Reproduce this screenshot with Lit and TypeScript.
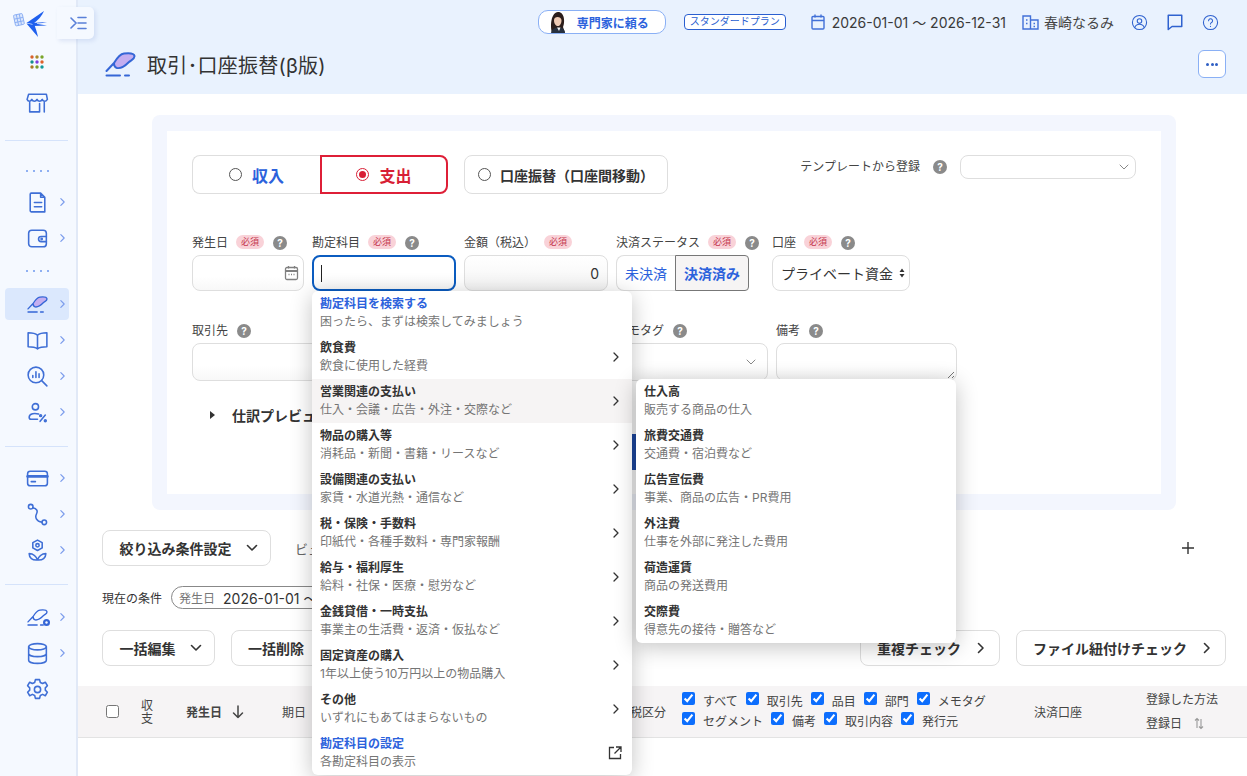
import { LitElement, css, html, svg } from "lit";
import { customElement } from "lit/decorators.js";

const icon = (body: unknown, size = 25, box = "0 0 24 24") =>
  html`<svg width=${size} height=${size} viewBox=${box} fill="none" stroke="currentColor" stroke-width="1.5" stroke-linecap="round" stroke-linejoin="round">${body}</svg>`;

const feather = (w: number, h: number, fill: string) =>
  html`<svg width=${w} height=${h} viewBox="0 0 31 25" fill="none" stroke="#3566d6" stroke-width="2" stroke-linecap="round" stroke-linejoin="round">
    <path d="M1.500 19 L9 11 C12 6 15 2 19 1.500 C23 1 29 1 29.500 4 C30 7 26 8 24 10 C21 13 17 17 12 16 C10 15.500 9 13 9 11" fill=${fill} />
    <path d="M1.500 23.500 H15 M20 23.500 H24" />
  </svg>`;

const help = html`<span class="help">?</span>`;
const req = html`<span class="req">必須</span>`;
const chev = html`<svg class="chev" width="6" height="10" viewBox="0 0 6 10" fill="none" stroke="currentColor" stroke-width="1.4" stroke-linecap="round" stroke-linejoin="round"><path d="M1 1l4 4-4 4" /></svg>`;
const down = html`<svg width="12" height="8" viewBox="0 0 12 8" fill="none" stroke="#333" stroke-width="1.6" stroke-linecap="round" stroke-linejoin="round"><path d="M1.500 1.500L6 6l4.500-4.500" /></svg>`;
const right = html`<svg width="8" height="12" viewBox="0 0 8 12" fill="none" stroke="#333" stroke-width="1.6" stroke-linecap="round" stroke-linejoin="round"><path d="M1.500 1.500L6 6l-4.500 4.500" /></svg>`;
const menuChev = html`<svg width="6" height="10" viewBox="0 0 6 10" fill="none" stroke="#333" stroke-width="1.3" stroke-linecap="round" stroke-linejoin="round"><path d="M1 1l4 4-4 4" /></svg>`;
const thinDown = html`<svg width="10" height="6" viewBox="0 0 10 6" fill="none" stroke="#888" stroke-width="1" stroke-linecap="round" stroke-linejoin="round"><path d="M1 1l4 4 4-4" /></svg>`;

const store = svg`<path d="M3.500 4h17l1 5c-1.500 2.500-4 2.500-5 0-1 2.500-4 2.500-5 0-1 2.500-4 2.500-5 0-1 2.500-3.500 2.500-4.500 0zM4.500 12v9h9.500v-8M18.500 12v9" />`;

const navA = [
  svg`<path d="M6 3h9l4 4v14H6a1 1 0 0 1-1-1V4a1 1 0 0 1 1-1zM15 3v4h4M9 12h7M9 16h7" />`,
  svg`<rect x="3.500" y="4" width="17" height="16" rx="3" /><path d="M20.500 10h-5a2 2 0 0 0 0 5h5" /><circle cx="16" cy="12.500" r=".6" />`,
];

const navB = [
  svg`<path d="M12 7c-2-2-5-2.500-9-2.500V18c4 0 7 .5 9 2 2-1.500 5-2 9-2V4.500C17 4.500 14 5 12 7zM12 7v13" />`,
  svg`<circle cx="10.500" cy="10.500" r="7.500" /><path d="M16 16l5 5M7.500 13v-2M10.500 13V7.500M13.500 13v-3.500" />`,
  svg`<circle cx="10" cy="6.500" r="3" /><path d="M13 13.500c-3-1-9-1-9 3 0 1.500 1 2 2 2h6M14.500 20.500l5-6" /><circle cx="15" cy="15" r=".9" /><circle cx="19.500" cy="20" r=".9" />`,
];

const navC = [
  svg`<rect x="2.500" y="5" width="19" height="14" rx="2.500" /><path d="M2.500 10h19" stroke-width="2.500" /><path d="M6 15h4" />`,
  svg`<circle cx="5.500" cy="4.500" r="2.200" /><circle cx="18.500" cy="19.500" r="2.200" /><path d="M7.500 5.500c4 1 5 3 3.500 6-1.500 3-.5 7 5.300 8" />`,
  svg`<path d="M12 2l4.500 2.500v5L12 12 7.500 9.500v-5z" /><circle cx="12" cy="7" r="1.600" /><path d="M12 21c-1-3-4-6-8-6 0 4 3 6.500 8 6zM12 21c1-3 4-6 8-6 0 4-3 6.500-8 6z" />`,
];

const gear = svg`<circle cx="12" cy="12" r="3" /><path d="M10 2.500h4l.7 2.800 2.200 1 2.600-1.300 2 3.400-2 2 0 2.200 2 2-2 3.400-2.600-1.300-2.200 1-.7 2.800h-4l-.7-2.800-2.200-1-2.600 1.300-2-3.400 2-2 0-2.200-2-2 2-3.400 2.600 1.300 2.200-1z" />`;
const db = svg`<ellipse cx="12" cy="5.500" rx="8.500" ry="3" /><path d="M3.500 5.500v13c0 1.700 3.800 3 8.500 3s8.500-1.300 8.500-3v-13M3.500 12c0 1.700 3.800 3 8.500 3s8.500-1.300 8.500-3" />`;

const menuItems = [
  ["飲食費", "飲食に使用した経費"],
  ["営業関連の支払い", "仕入・会議・広告・外注・交際など"],
  ["物品の購入等", "消耗品・新聞・書籍・リースなど"],
  ["設備関連の支払い", "家賃・水道光熱・通信など"],
  ["税・保険・手数料", "印紙代・各種手数料・専門家報酬"],
  ["給与・福利厚生", "給料・社保・医療・慰労など"],
  ["金銭貸借・一時支払", "事業主の生活費・返済・仮払など"],
  ["固定資産の購入", "1年以上使う10万円以上の物品購入"],
  ["その他", "いずれにもあてはまらないもの"],
];

const subItems = [
  ["仕入高", "販売する商品の仕入"],
  ["旅費交通費", "交通費・宿泊費など"],
  ["広告宣伝費", "事業、商品の広告・PR費用"],
  ["外注費", "仕事を外部に発注した費用"],
  ["荷造運賃", "商品の発送費用"],
  ["交際費", "得意先の接待・贈答など"],
];

@customElement("app-root")
export class AppRoot extends LitElement {
  static override styles = css`
    :host {
      display: flex;
      position: relative;
      width: 100%;
      height: 100vh;
      overflow: hidden;
      background: #fff;
      color: #333;
      font-family: Inter, "Noto Sans CJK JP", sans-serif;
      font-size: 12px;
    }
    * {
      box-sizing: border-box;
    }

    /* sidebar */
    .side {
      display: flex;
      flex-direction: column;
      flex: none;
      width: 78px;
      height: 100%;
      background: #f5f9ff;
      border-right: 2px solid #e1e9f7;
      color: #3f6fd6;
    }
    .logo {
      height: 44px;
      padding: 9px 0 0 13px;
    }
    .row {
      position: relative;
      display: flex;
      flex: none;
      align-items: center;
      justify-content: center;
      width: 64px;
      height: 32px;
      margin: 2px 0 2px 5px;
      border-radius: 4px;
    }
    .row.on {
      background: #dbe8fd;
    }
    .row .chev {
      position: absolute;
      left: 55px;
      top: 11px;
      color: #7b9cec;
      width: 5px;
    }
    .gap-store {
      margin-top: 6px;
    }
    .rule {
      flex: none;
      height: 1px;
      margin: 20px 8px 0 5px;
      background: #d5e3fb;
    }
    .rule.tight {
      margin-top: 16px;
    }
    .sp {
      flex: none;
    }
    .dots {
      display: flex;
      flex: none;
      justify-content: center;
      align-items: center;
      gap: 5px;
      width: 64px;
      height: 20px;
      margin-left: 5px;
    }
    .dots i {
      width: 2px;
      height: 2px;
      background: #8fb0f2;
    }
    .collapse {
      position: absolute;
      left: 57px;
      top: 7px;
      display: flex;
      align-items: flex-start;
      width: 37px;
      height: 32px;
      padding: 9px 0 0 13px;
      border: 0;
      background: #f5f9ff;
      border-radius: 0 5px 5px 0;
      box-shadow: 2px 2px 4px rgba(90, 120, 190, 0.16);
      color: #5a80d8;
    }
    .with-gear {
      position: relative;
      display: flex;
    }
    .with-gear .cog {
      position: absolute;
      left: 15px;
      top: 9px;
    }

    /* header */
    .main {
      flex: 1;
      min-width: 0;
    }
    .head {
      height: 94px;
      background: #e9f2fe;
      padding-right: 21px;
    }
    .top {
      display: flex;
      align-items: center;
      justify-content: flex-end;
      height: 44px;
      color: #333;
      padding-right: 7px;
    }
    .expert {
      display: flex;
      align-items: center;
      width: 128px;
      height: 24px;
      padding-left: 9px;
      background: #fff;
      border: 1px solid #8ab0f5;
      border-radius: 10px;
      color: #2c62dc;
      font-weight: 700;
      font-size: 12px;
      overflow: hidden;
      margin-right: 18px;
    }
    .expert svg {
      margin-right: 9px;
    }
    .plan {
      height: 16px;
      width: 102px;
      line-height: 13px;
      text-align: center;
      border: 1px solid #2a5fd0;
      border-radius: 4px;
      background: #fff;
      color: #2a5fd0;
      font-size: 10px;
      margin-right: 25px;
    }
    .period {
      display: flex;
      align-items: center;
      gap: 7px;
      font-size: 14px;
      margin-right: 16px;
      color: #3a3a3a;
    }
    .who {
      display: flex;
      align-items: center;
      gap: 5px;
      font-size: 14px;
      margin-right: 3px;
      color: #444;
    }
    .top .ic {
      display: flex;
      color: #2f62cf;
      margin-left: 14px;
    }
    .top .ic.chat {
      margin-left: 18px;
    }
    .top .ic.q {
      margin-left: 18px;
    }
    .titlebar {
      display: flex;
      align-items: center;
      height: 36px;
      padding-left: 27px;
      margin-top: 2px;
    }
    .titlebar h1 {
      margin: 0 0 0 11px;
      font-size: 20px;
      font-weight: 400;
      letter-spacing: 0.2px;
      color: #333;
    }
    .more {
      display: flex;
      justify-content: center;
      align-items: center;
      gap: 1.500px;
      width: 28px;
      height: 28px;
      margin-left: auto;
      background: #fff;
      border: 1px solid #8ab0f5;
      border-radius: 6px;
    }
    .more i {
      width: 3px;
      height: 3px;
      border-radius: 50%;
      background: #2f5fc4;
    }

    /* form card */
    .card {
      width: 1024px;
      margin: 21px 0 0 74px;
      padding: 16px 15px;
      background: #f3f6fe;
      border-radius: 8px;
    }
    .inner {
      height: 363px;
      padding: 24px 25px;
      background: #fff;
    }
    .types {
      display: flex;
      height: 39px;
    }
    .type {
      display: flex;
      align-items: center;
      justify-content: center;
      gap: 10px;
      width: 128px;
      border: 1px solid #dedede;
      font-weight: 700;
      font-size: 16px;
    }
    .type.in {
      border-radius: 8px 0 0 8px;
      border-right: 0;
      color: #2c62dc;
    }
    .type.out {
      border: 2px solid #de1f37;
      border-radius: 0 8px 8px 0;
      color: #d81f36;
    }
    .type.move {
      width: 204px;
      margin-left: 16px;
      border-radius: 8px;
      color: #333;
      font-size: 14px;
      gap: 9px;
    }
    .radio {
      position: relative;
      width: 13px;
      height: 13px;
      border: 1px solid #555;
      border-radius: 50%;
    }
    .out .radio {
      border-color: #d81f36;
    }
    .out .radio::after {
      content: "";
      position: absolute;
      inset: 2px;
      border-radius: 50%;
      background: #d81f36;
    }
    .tmpl {
      display: flex;
      align-items: center;
      height: 24px;
      margin-left: auto;
      color: #444;
      font-size: 12px;
      font-weight: 400;
    }
    .tmpl-text {
      margin-bottom: 3px;
    }
    .tmpl .help {
      margin: 0 13px 0 13px;
    }
    .pick {
      display: flex;
      align-items: center;
      justify-content: flex-end;
      width: 176px;
      height: 24px;
      padding-right: 6px;
      border: 1px solid #dedede;
      border-radius: 8px;
    }
    .fields {
      display: flex;
      gap: 8px;
      margin-top: 40px;
    }
    .fields.second {
      margin-top: 31px;
    }
    .f {
      position: relative;
    }
    .lab {
      display: flex;
      align-items: center;
      height: 21px;
      padding-bottom: 6px;
      color: #444;
      white-space: nowrap;
    }
    .help {
      display: inline-flex;
      align-items: center;
      justify-content: center;
      flex: none;
      width: 14px;
      height: 14px;
      margin: 2px 0 0 9px;
      border-radius: 50%;
      background: #8a8a8a;
      color: #fff;
      font-size: 10px;
      font-weight: 700;
      line-height: 1;
    }
    .req {
      flex: none;
      width: 28px;
      height: 14px;
      margin-left: 8px;
      border-radius: 7px;
      background: #f9d2d8;
      color: #c4364d;
      font-size: 9px;
      line-height: 14px;
      text-align: center;
    }
    .box {
      display: flex;
      align-items: center;
      height: 36px;
      padding: 0 8px;
      border: 1px solid #dedede;
      border-radius: 8px;
      background: linear-gradient(#fff 60%, #f8f8f8);
    }
    .w112 {
      width: 112px;
    }
    .w133 {
      width: 133px;
    }
    .w144 {
      width: 144px;
    }
    .box.date {
      justify-content: flex-end;
      padding-right: 4px;
      color: #808080;
    }
    .box.focus {
      border: 2px solid #0b5cc0;
      padding-left: 7px;
    }
    .caret {
      width: 1px;
      height: 17px;
      background: #222;
    }
    .box.amount {
      justify-content: flex-end;
      font-size: 14px;
      background: linear-gradient(#fff, #f4f4f4);
    }
    .seg {
      display: flex;
      height: 36px;
      font-size: 14px;
      color: #2c62dc;
    }
    .seg span {
      display: flex;
      align-items: center;
      justify-content: center;
    }
    .seg .off {
      width: 59px;
      border: 1px solid #dedede;
      border-right: 0;
      border-radius: 8px 0 0 8px;
    }
    .seg .sel {
      flex: 1;
      border: 1px solid #777;
      border-radius: 0 4px 4px 0;
      background: #f6f4f4;
      font-weight: 700;
    }
    .acct {
      margin-left: 15px;
    }
    .acct .box {
      justify-content: space-between;
      width: 138px;
      padding: 0 4px 0 8px;
      font-size: 14px;
      background: #fff;
    }
    .tall {
      height: 38px;
    }
    .w416 {
      width: 416px;
    }
    .w152 {
      width: 152px;
    }
    .w181 {
      width: 181px;
    }
    .box.tall.sel-like {
      justify-content: flex-end;
      padding-right: 11px;
    }
    .box.note {
      position: relative;
    }
    .grip {
      position: absolute;
      right: 1px;
      bottom: 1px;
    }
    .preview {
      display: flex;
      align-items: center;
      height: 20px;
      margin-top: 24px;
      padding-left: 18px;
      font-size: 14px;
      font-weight: 700;
    }
    .preview i {
      width: 0;
      height: 0;
      margin-right: 17px;
      border-left: 5px solid #333;
      border-top: 4px solid transparent;
      border-bottom: 4px solid transparent;
    }
    .submit {
      width: 160px;
      height: 36px;
      margin: 9px auto 0;
      transform: translateX(-1px);
      border-radius: 6px;
      background: #1f4ba8;
    }

    /* popup menu */
    .menu {
      position: absolute;
      z-index: 5;
      top: 100%;
      left: 0;
      width: 320px;
      background: #fff;
      border-radius: 6px;
      box-shadow: 0 4px 22px rgba(0, 0, 0, 0.24);
    }
    .item {
      position: relative;
      display: flex;
      flex-direction: column;
      justify-content: center;
      height: 44px;
      padding: 0 8px;
      font-size: 12px;
      line-height: 18px;
      color: #757575;
    }
    .item b {
      color: #333;
      font-weight: 700;
    }
    .item.link b {
      color: #2c62dc;
    }
    .item.hover {
      background: #f6f4f4;
    }
    .item > svg {
      position: absolute;
      right: 13px;
      top: 17px;
    }
    .item > svg.ext {
      right: 10px;
      top: 15px;
    }
    .sub {
      top: 0;
      left: 324px;
    }

    /* list area */
    .bar {
      display: flex;
      align-items: center;
      height: 36px;
      padding: 0 21px 0 24px;
    }
    .filters {
      margin-top: 20px;
    }
    .btn {
      display: flex;
      align-items: center;
      justify-content: center;
      gap: 14px;
      height: 36px;
      background: #fff;
      border: 1px solid #dedede;
      border-radius: 8px;
      font-size: 14px;
      font-weight: 700;
      color: #333;
    }
    .btn.drop {
      padding-left: 4px;
    }
    .btn.next {
      gap: 16px;
      padding-left: 2px;
    }
    .view {
      margin-left: 24px;
      font-size: 13px;
      color: #666;
    }
    .plus {
      margin: 0 32px 0 auto;
      display: flex;
    }
    .conds {
      display: flex;
      align-items: center;
      height: 23px;
      margin-top: 20px;
      padding-left: 24px;
    }
    .chip {
      display: flex;
      align-items: center;
      width: 220px;
      height: 23px;
      margin-left: 9px;
      padding-left: 7px;
      border: 1px solid #888;
      border-radius: 12px;
      font-size: 14px;
      white-space: nowrap;
    }
    .chip em {
      margin-right: 8px;
      font-size: 12px;
      font-style: normal;
      color: #777;
    }
    .bulk {
      margin-top: 21px;
    }
    .bulk .btn + .btn {
      margin-left: 16px;
    }
    .bulk .btn + .btn.ml-auto {
      margin-left: auto;
    }
    .thead {
      display: grid;
      grid-template-columns: 35px 45px 96px 348px 52px 352px 112px 1fr;
      align-items: center;
      height: 52px;
      margin-top: 20px;
      padding-left: 28px;
      background: #f6f4f5;
      border-bottom: 1px solid #e3e3e3;
      color: #444;
    }
    .thead input {
      width: 13px;
      height: 13px;
      margin: 0;
      accent-color: #0d6efd;
    }
    .narrow {
      width: 12px;
      line-height: 13px;
    }
    .sort {
      display: flex;
      align-items: center;
      gap: 10px;
      font-weight: 700;
    }
    .checks {
      display: flex;
      flex-direction: column;
      gap: 4px;
      margin-bottom: 2px;
    }
    .checks div {
      display: flex;
      gap: 8px;
      height: 16px;
    }
    .checks label {
      display: flex;
      align-items: center;
      gap: 8px;
    }
    .checks input {
      margin-top: -4px;
    }
    .method {
      line-height: 24px;
    }
    .method span {
      display: flex;
      align-items: center;
      gap: 12px;
    }
  `;

  private navRow(body: unknown, active = false, custom = false) {
    return html`<div class="row ${active ? "on" : ""}">${custom ? body : icon(body)}${chev}</div>`;
  }

  private dots() {
    return html`<div class="dots"><i></i><i></i><i></i><i></i></div>`;
  }

  private logo() {
    return html`<svg width="36" height="30" viewBox="0 0 36 30">
      <g transform="rotate(-12 7 11)" fill="#dbe7fc" stroke="#8aaef4" stroke-width=".9">
        <rect x="1.500" y="5" width="9" height="11" rx="1" />
        <path d="M1.500 9h9M1.500 12.500h9M4.500 5v11M7.500 5v11" fill="none" />
      </g>
      <path d="M31 2 L13.500 14 L20 15 C25 11 29 7 31 2 Z" fill="#1f60ee" />
      <path d="M13.500 14.500 L25 28 C24 23 22.500 19 21.500 16 Z" fill="#1f60ee" />
      <path d="M19 14 L34 13 L25 15 L34 16.500 L20 17 Z" fill="#1f60ee" />
      <path d="M24 14.500 L34 14.800" stroke="#f5f9ff" stroke-width=".7" />
    </svg>`;
  }

  private apps() {
    const colors = ["#d9622b", "#a88b2a", "#7aa52a", "#158f8f", "#7b3fe0", "#e0602a", "#a87a25", "#7a9a2a", "#129a9a"];
    return html`<svg width="16" height="16" viewBox="0 0 16 16">
      ${colors.map((c, i) => svg`<circle cx=${3 + (i % 3) * 5} cy=${3 + Math.floor(i / 3) * 5} r="1.700" fill=${c} />`)}
    </svg>`;
  }

  private portrait() {
    return html`<svg width="20" height="22" viewBox="0 0 20 22">
      <path d="M4 22 C2 14 3 2 10 1 C17 1 17 12 15 16 L17 22 Z" fill="#2b1d1a" />
      <path d="M6 9 C6 5 13 5 13.500 9 C13.500 13 11.500 15 10 15 C8 15 6 13 6 9 Z" fill="#eec9b2" />
      <path d="M3 22 C4 18 7 17 9 16.500 L11 18 L13 16.500 C15 17 17 19 17 22 Z" fill="#26303f" />
      <path d="M9 16.500 L11 20 L12.500 16.500 Z" fill="#f4f4f4" />
    </svg>`;
  }

  private renderMenu() {
    return html`<div class="menu">
      <div class="item link"><b>勘定科目を検索する</b>困ったら、まずは検索してみましょう</div>
      ${menuItems.map(
        ([t, d], i) => html`<div class="item ${i === 1 ? "hover" : ""}">
          <b>${t}</b>${d}${menuChev}
          ${i === 1
            ? html`<div class="menu sub">
                ${subItems.map(([st, sd]) => html`<div class="item"><b>${st}</b>${sd}</div>`)}
              </div>`
            : ""}
        </div>`
      )}
      <div class="item link">
        <b>勘定科目の設定</b>各勘定科目の表示
        <svg class="ext" width="14" height="14" viewBox="0 0 14 14" fill="none" stroke="#333" stroke-width="1.300"><path d="M6 1.500H1.500v11h11V8M8 1h5v5M13 1L6.500 7.500" /></svg>
      </div>
    </div>`;
  }

  private check(label: string) {
    return html`<label><input type="checkbox" checked />${label}</label>`;
  }

  override render() {
    return html`
      <aside class="side">
        <div class="logo">${this.logo()}</div>
        <div class="row">${this.apps()}</div>
        <div class="row gap-store">${icon(store)}</div>
        <div class="rule"></div>
        <div class="sp" style="height:20px"></div>
        ${this.dots()}
        <div class="sp" style="height:3px"></div>
        ${navA.map((p) => this.navRow(p))}
        <div class="sp" style="height:5px"></div>
        ${this.dots()}
        <div class="sp" style="height:5px"></div>
        ${this.navRow(feather(21, 17, "#c4aef0"), true, true)}
        ${navB.map((p) => this.navRow(p))}
        <div class="rule tight"></div>
        <div class="sp" style="height:13px"></div>
        ${navC.map((p) => this.navRow(p))}
        <div class="rule tight"></div>
        <div class="sp" style="height:14px"></div>
        ${this.navRow(
          html`<span class="with-gear">${feather(21, 17, "none")}
            <svg class="cog" width="9" height="9" viewBox="0 0 9 9"><circle cx="4.500" cy="4.500" r="3.500" fill="#3566d6" /><circle cx="4.500" cy="4.500" r="1.200" fill="#f5f9ff" /></svg></span>`,
          false,
          true
        )}
        ${this.navRow(db)}
        <div class="row">${icon(gear)}</div>
      </aside>
      <button class="collapse" aria-label="menu">
        <svg width="17" height="14" viewBox="0 0 17 14" fill="none" stroke="currentColor" stroke-width="1.600" stroke-linecap="round"><path d="M1 2l5 5-5 5M8 1.500h8M8 7h8M8 12.500h8" /></svg>
      </button>

      <div class="main">
        <header class="head">
          <div class="top">
            <div class="expert">${this.portrait()}専門家に頼る</div>
            <div class="plan">スタンダードプラン</div>
            <div class="period">
              <svg width="14" height="16" viewBox="0 0 14 16" fill="none" stroke="#4170d8" stroke-width="1.400"><rect x="1" y="2.500" width="12" height="12.500" rx="1" /><path d="M1 6.500h12M4 .5v3M10 .5v3" /></svg>
              2026-01-01 ～ 2026-12-31
            </div>
            <div class="who">
              <svg width="17" height="15" viewBox="0 0 17 15" fill="none" stroke="#4170d8" stroke-width="1.400"><path d="M1 1h7.500v13H1zM8.500 5H16v9H8.500M4 5h1.500M4 8.500h1.500M11.500 8.500h1.500M11.500 11.500h1.500" /></svg>
              春崎なるみ
            </div>
            <span class="ic">${icon(svg`<circle cx="12" cy="12" r="10" /><circle cx="12" cy="10" r="3.200" /><path d="M5.500 19c1-3.500 3.500-4.500 6.500-4.500s5.500 1 6.500 4.500" />`, 17)}</span>
            <span class="ic chat">${icon(svg`<path d="M3 3h18v15H8l-5 4z" stroke-width="2" />`, 18)}</span>
            <span class="ic q">${icon(svg`<circle cx="12" cy="12" r="10" /><path d="M9.300 9.500a2.800 2.800 0 1 1 4.300 2.400c-1 .7-1.600 1.200-1.600 2.300M12 17.300v.2" />`, 17)}</span>
          </div>
          <div class="titlebar">
            ${feather(31, 25, "#c4aef0")}
            <h1>取引･口座振替(β版)</h1>
            <div class="more"><i></i><i></i><i></i></div>
          </div>
        </header>

        <section class="card">
          <div class="inner">
            <div class="types">
              <div class="type in"><span class="radio"></span>収入</div>
              <div class="type out"><span class="radio"></span>支出</div>
              <div class="type move"><span class="radio"></span>口座振替（口座間移動）</div>
              <div class="tmpl"><span class="tmpl-text">テンプレートから登録</span>${help}<div class="pick">${thinDown}</div></div>
            </div>

            <div class="fields">
              <div class="f w112">
                <div class="lab">発生日${req}${help}</div>
                <div class="box date">
                  <svg width="15" height="16" viewBox="0 0 15 16" fill="none" stroke="currentColor" stroke-width="1.300"><rect x="1.500" y="2.500" width="12" height="12" rx="1.500" /><path d="M1.500 6h12" stroke-width="2" /><path d="M4.500 1v2.500M10.500 1v2.500M4.500 9.500h1M7 9.500h1M9.500 9.500h1" /></svg>
                </div>
              </div>
              <div class="f w144">
                <div class="lab">勘定科目${req}${help}</div>
                <div class="box focus"><span class="caret"></span></div>
                ${this.renderMenu()}
              </div>
              <div class="f w144">
                <div class="lab">金額（税込）${req}</div>
                <div class="box amount">0</div>
              </div>
              <div class="f w133">
                <div class="lab">決済ステータス${req}${help}</div>
                <div class="seg"><span class="off">未決済</span><span class="sel">決済済み</span></div>
              </div>
              <div class="f acct">
                <div class="lab">口座${req}${help}</div>
                <div class="box">
                  プライベート資金
                  <svg width="6" height="10" viewBox="0 0 6 10" fill="#333"><path d="M3 .5L5.500 4H.5zM3 9.500L.5 6h5z" /></svg>
                </div>
              </div>
            </div>

            <div class="fields second">
              <div class="f w416">
                <div class="lab">取引先${help}</div>
                <div class="box tall"></div>
              </div>
              <div class="f w152">
                <div class="lab">メモタグ${help}</div>
                <div class="box tall sel-like">${thinDown}</div>
              </div>
              <div class="f w181">
                <div class="lab">備考${help}</div>
                <div class="box tall note">
                  <svg class="grip" width="8" height="8" viewBox="0 0 8 8" stroke="#777" stroke-width="1"><path d="M1 7l6-6M5 7l2-2" /></svg>
                </div>
              </div>
            </div>

            <div class="preview"><i></i>仕訳プレビュー</div>
            <div class="submit"></div>
          </div>
        </section>

        <div class="bar filters">
          <div class="btn drop" style="width:169px">絞り込み条件設定${down}</div>
          <span class="view">ビュー設定</span>
          <span class="plus"><svg width="12" height="12" viewBox="0 0 12 12" stroke="#333" stroke-width="1.400"><path d="M6 0v12M0 6h12" /></svg></span>
        </div>

        <div class="conds">現在の条件<div class="chip"><em>発生日</em>2026-01-01 ～</div></div>

        <div class="bar bulk">
          <div class="btn drop" style="width:113px">一括編集${down}</div>
          <div class="btn" style="width:90px">一括削除</div>
          <div class="btn next ml-auto" style="width:140px">重複チェック${right}</div>
          <div class="btn next" style="width:210px">ファイル紐付けチェック${right}</div>
        </div>

        <div class="thead">
          <input type="checkbox" />
          <span class="narrow">収支</span>
          <span class="sort">発生日
            <svg width="12" height="14" viewBox="0 0 12 14" fill="none" stroke="#444" stroke-width="1.500" stroke-linecap="round" stroke-linejoin="round"><path d="M6 1v11.500M1.500 8L6 12.500 10.500 8" /></svg>
          </span>
          <span>期日</span>
          <span>税区分</span>
          <div class="checks">
            <div>${["すべて", "取引先", "品目", "部門", "メモタグ"].map((t) => this.check(t))}</div>
            <div>${["セグメント", "備考", "取引内容", "発行元"].map((t) => this.check(t))}</div>
          </div>
          <span>決済口座</span>
          <div class="method">
            登録した方法
            <span>登録日
              <svg width="10" height="13" viewBox="0 0 10 13" fill="none" stroke="#999" stroke-width="1.100"><path d="M3 11V1.500M1 3.500l2-2 2 2M7 2v9.500M5 9.500l2 2 2-2" /></svg>
            </span>
          </div>
        </div>
      </div>
    `;
  }
}
